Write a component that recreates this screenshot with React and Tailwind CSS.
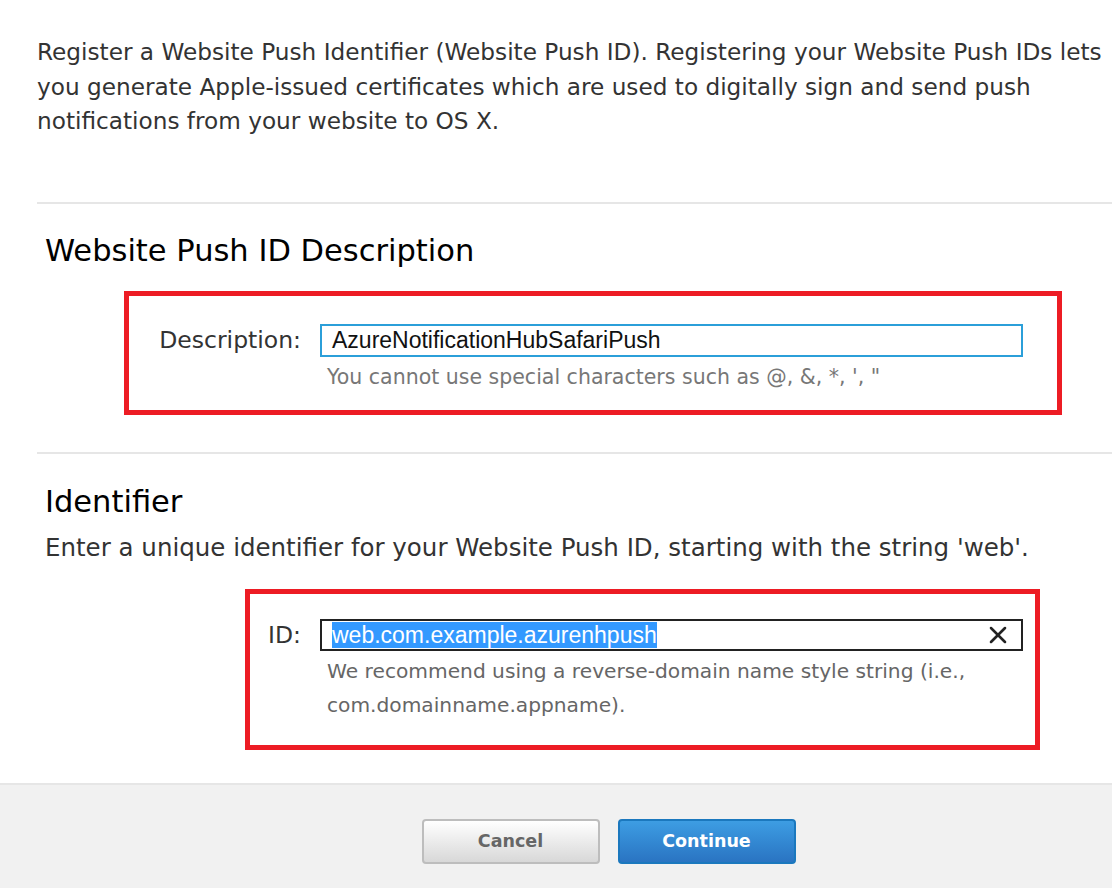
import { X } from 'lucide-react'

const body = "font-['DejaVu_Sans',sans-serif]"
const fieldText = "font-['Liberation_Sans',Arial,sans-serif]"

export default function App() {
  return (
    <div className={`w-[1112px] h-[888px] bg-white overflow-hidden flex flex-col ${body}`}>
      <div className="flex-1 pl-[37px]">
        <p className="pt-[35px] pr-[4px] text-[23.2px] leading-[34.5px] text-[#333]">
          Register a Website Push Identifier (Website Push ID). Registering your Website Push IDs lets you generate Apple-issued certificates which are used to digitally sign and send push notifications from your website to OS X.
        </p>

        <div className="mt-[63px] border-t-2 border-[#e6e6e6]" />

        <h2 className="mt-[27px] ml-[8px] text-[30.5px] leading-[40px] text-black">Website Push ID Description</h2>

        <div className="mt-[20px] ml-[87px] w-[938px] h-[124px] border-[5px] border-[#ed1c24] flex flex-col pt-[27px]">
          <div className="flex items-center">
            <label className="w-[172px] text-right text-[23.5px] text-[#333]">Description:</label>
            <div className={`ml-[19px] w-[703px] h-[33px] border-2 border-[#2b9fd9] flex items-center pl-[10px] text-[23px] text-[#111] ${fieldText}`}>
              AzureNotificationHubSafariPush
            </div>
          </div>
          <p className="ml-[198px] mt-[5px] text-[20.5px] leading-[28px] text-[#777]">
            You cannot use special characters such as @, &amp;, *, ', "
          </p>
        </div>

        <div className="mt-[37px] border-t-2 border-[#e6e6e6]" />

        <h2 className="mt-[28px] ml-[8px] text-[30.5px] leading-[40px] text-black">Identifier</h2>
        <p className="ml-[8px] mt-[9px] text-[24.5px] leading-[34px] text-[#333]">
          Enter a unique identifier for your Website Push ID, starting with the string 'web'.
        </p>

        <div className="mt-[24px] ml-[208px] w-[795px] h-[161px] border-[5px] border-[#ed1c24] flex flex-col pt-[24px]">
          <div className="flex items-center">
            <label className="w-[51px] text-right text-[23.5px] text-[#333]">ID:</label>
            <div className={`ml-[19px] w-[703px] h-[32px] border-2 border-[#222] flex items-center pl-[10px] pr-[9px] text-[23px] ${fieldText}`}>
              <span className="bg-[#3399ff] text-white leading-[26px]">web.com.example.azurenhpush</span>
              <X className="ml-auto text-[#222]" size={28} strokeWidth={2.2} />
            </div>
          </div>
          <p className="ml-[77px] mt-[1px] pr-[30px] text-[20.2px] leading-[34px] text-[#666]">
            We recommend using a reverse-domain name style string (i.e., com.domainname.appname).
          </p>
        </div>
      </div>

      <div className="h-[105px] bg-[#f1f1f1] border-t-2 border-[#e6e6e6] flex items-start justify-center gap-[18px] pt-[34px] pl-[105px]">
        <button className="w-[178px] h-[45px] rounded-[4px] border-2 border-[#bdbdbd] bg-gradient-to-b from-white to-[#d8d8d8] text-[17.5px] font-bold text-[#666]">
          Cancel
        </button>
        <button className="w-[178px] h-[45px] rounded-[4px] border-2 border-[#1b78be] bg-gradient-to-b from-[#3d9de3] to-[#2a74c2] text-[17.5px] font-bold text-white">
          Continue
        </button>
      </div>
    </div>
  )
}
